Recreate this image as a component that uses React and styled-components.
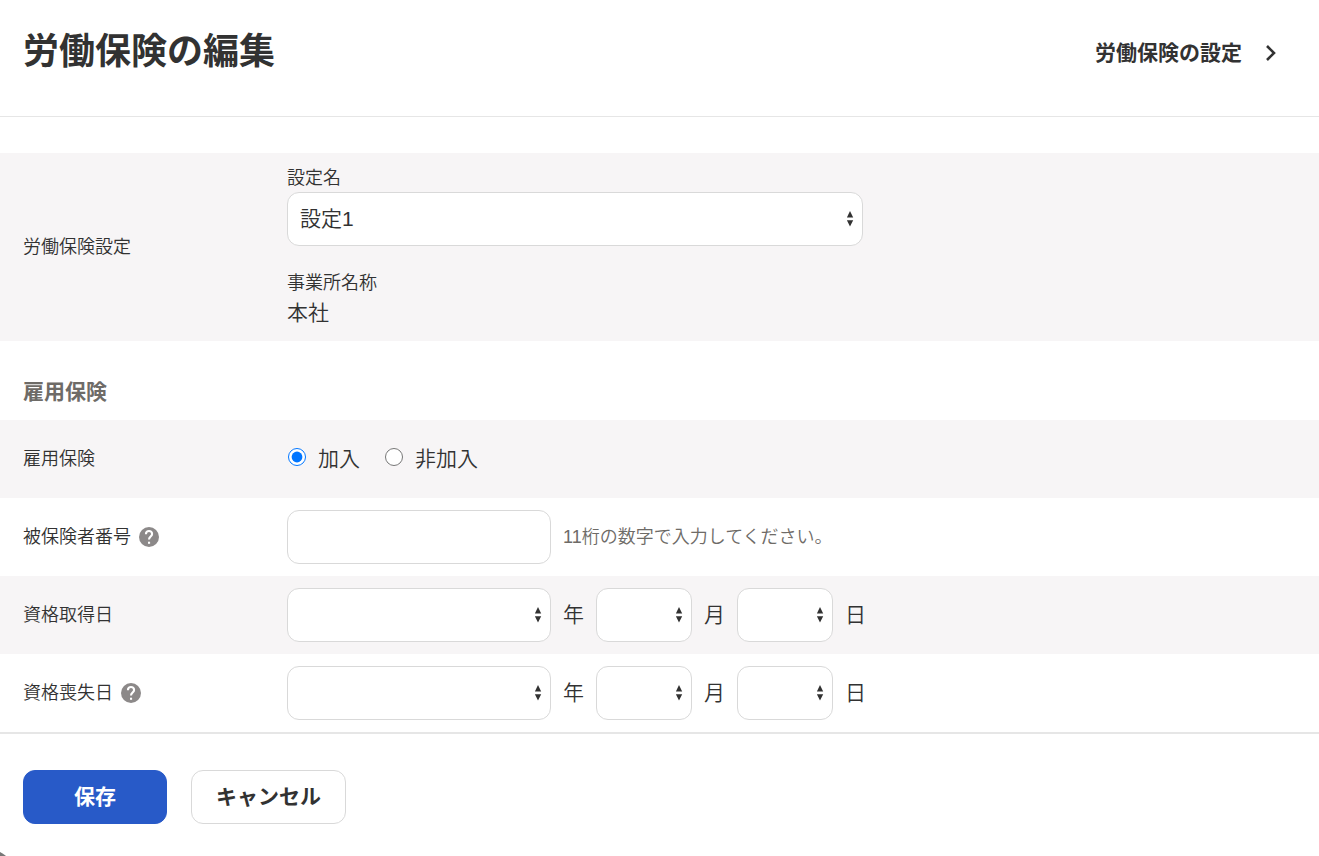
import React, { useState } from 'react';
import styled, { createGlobalStyle } from 'styled-components';

const GlobalStyle = createGlobalStyle`
  * {
    box-sizing: border-box;
  }

  body {
    margin: 0;
    background: #fff;
    color: #323232;
    font-family: "Liberation Sans", "Noto Sans CJK JP", sans-serif;
    font-size: 21px;
    font-weight: 350;
    line-height: 32px;
  }

  button, input, select {
    font: inherit;
    color: inherit;
  }
`;

const Page = styled.div`
  position: relative;
  min-height: 100vh;
`;

const Header = styled.header`
  display: flex;
  justify-content: space-between;
  align-items: flex-start;
  padding: 25px 36px 35px 23px;
  margin-bottom: 36px;
  border-bottom: 1px solid #e6e6e6;
`;

const Title = styled.h1`
  margin: 0;
  font-size: 36px;
  line-height: 54px;
  font-weight: 700;
`;

const SettingsLink = styled.a`
  display: flex;
  align-items: center;
  gap: 16px;
  line-height: 56px;
  font-weight: 700;
  color: inherit;
  text-decoration: none;
`;

const SectionTitle = styled.h2`
  margin: 0;
  padding: 35px 23px 12px;
  font-size: 21px;
  line-height: 32px;
  font-weight: 700;
  color: #6e6b67;
`;

const Row = styled.div`
  display: grid;
  grid-template-columns: 264px 1fr;
  align-items: center;
  min-height: 78px;
  padding: 12px 23px;
  background: ${props => props.$shaded ? '#f7f5f6' : '#fff'};
`;

const RowLabel = styled.div`
  display: flex;
  align-items: center;
  gap: 8px;
  font-size: 18px;
  line-height: 27px;
`;

const Fields = styled.div`
  display: flex;
  align-items: center;
  gap: ${props => props.$gap || 12}px;
`;

const Stack = styled.div`
  display: grid;
  gap: 24px;
`;

const SmallLabel = styled.label`
  display: block;
  font-size: 18px;
  line-height: 27px;
`;

const SelectBox = styled.div`
  position: relative;
  width: ${props => props.$width}px;
  max-width: 100%;

  svg {
    position: absolute;
    top: 19px;
    right: 9px;
    pointer-events: none;
  }
`;

const StyledSelect = styled.select`
  display: block;
  appearance: none;
  width: 100%;
  height: 54px;
  padding: 0 30px 0 12px;
  border: 1px solid #d9d9d9;
  border-radius: 12px;
  background: #fff;
`;

const TextInput = styled.input`
  width: 264px;
  height: 54px;
  padding: 0 12px;
  border: 1px solid #d9d9d9;
  border-radius: 12px;
  background: #fff;
`;

const RadioLabel = styled.label`
  display: flex;
  align-items: center;
  gap: 12px;
`;

const Radio = styled.input`
  width: 18px;
  height: 18px;
  margin: 0 0 4px 1px;
`;

const Hint = styled.span`
  font-size: 18px;
  line-height: 27px;
  color: #6e6b67;
`;

const HelpButton = styled.button`
  display: flex;
  padding: 0;
  border: none;
  background: none;
  cursor: pointer;
`;

const Footer = styled.footer`
  display: flex;
  gap: 24px;
  padding: 36px 23px 32px;
  border-top: 2px solid #e6e6e6;
`;

const Button = styled.button`
  min-width: 144px;
  height: 54px;
  padding: 0 24px;
  border: 1px solid ${props => props.$primary ? '#285ac8' : '#d9d9d9'};
  border-radius: 12px;
  background: ${props => props.$primary ? '#285ac8' : '#fff'};
  color: ${props => props.$primary ? '#fff' : '#323232'};
  font-weight: 700;
  cursor: pointer;
`;

const Corner = styled.svg`
  position: absolute;
  left: 0;
  bottom: 0;
`;

const HelpIcon = () => (
  <svg width="20" height="20" viewBox="0 0 20 20" fill="none" aria-hidden="true">
    <circle cx="10" cy="10" r="10" fill="#8c8989" />
    <path d="M6.9 7.2C6.9 5.2 8.2 4 10 4s3.1 1.2 3.1 2.9c0 2.5-3.1 2.7-3.1 5.6" stroke="#fff" strokeWidth="2.1" />
    <path d="M9 14.7h2.1v2.1H9z" fill="#fff" />
  </svg>
);

const Select = ({ id, label, width, options = [''] }) => (
  <SelectBox $width={width}>
    <StyledSelect id={id} aria-label={label}>
      {options.map(option => <option key={option}>{option}</option>)}
    </StyledSelect>
    <svg width="7" height="16" viewBox="0 0 7 16" fill="#323232" aria-hidden="true">
      <path d="M3 0L6.2 6.6H-.2zM3 15.6L-.2 9.2h6.4z" />
    </svg>
  </SelectBox>
);

const DateFields = ({ label }) => (
  <Fields role="group" aria-label={label}>
    <Select width={264} label={`${label} 年`} />
    <span>年</span>
    <Select width={96} label={`${label} 月`} />
    <span>月</span>
    <Select width={96} label={`${label} 日`} />
    <span>日</span>
  </Fields>
);

const App = () => {
  const [enrolled, setEnrolled] = useState(true);
  const [number, setNumber] = useState('');

  return (
    <>
      <GlobalStyle />
      <Page>
        <Header>
          <Title>労働保険の編集</Title>
          <SettingsLink href="#settings">
            労働保険の設定
            <svg width="25" height="24" viewBox="0 0 25 24" fill="none" stroke="#323232" strokeWidth="2.6" aria-hidden="true">
              <path d="M9 5l7 7-7 7" />
            </svg>
          </SettingsLink>
        </Header>

        <form onSubmit={(e) => e.preventDefault()}>
          <Row $shaded>
            <RowLabel>労働保険設定</RowLabel>
            <Stack>
              <div>
                <SmallLabel htmlFor="setting">設定名</SmallLabel>
                <Select id="setting" width={576} options={['設定1']} />
              </div>
              <div>
                <SmallLabel as="div">事業所名称</SmallLabel>
                <div>本社</div>
              </div>
            </Stack>
          </Row>

          <SectionTitle>雇用保険</SectionTitle>
          <Row $shaded>
            <RowLabel>雇用保険</RowLabel>
            <Fields $gap={24} role="radiogroup" aria-label="雇用保険">
              <RadioLabel>
                <Radio type="radio" name="enrolled" checked={enrolled} onChange={() => setEnrolled(true)} />
                加入
              </RadioLabel>
              <RadioLabel>
                <Radio type="radio" name="enrolled" checked={!enrolled} onChange={() => setEnrolled(false)} />
                非加入
              </RadioLabel>
            </Fields>
          </Row>
          <Row>
            <RowLabel>
              <label htmlFor="number">被保険者番号</label>
              <HelpButton type="button" aria-label="ヘルプ"><HelpIcon /></HelpButton>
            </RowLabel>
            <Fields>
              <TextInput id="number" type="text" value={number} onChange={(e) => setNumber(e.target.value)} />
              <Hint>11桁の数字で入力してください。</Hint>
            </Fields>
          </Row>
          <Row $shaded>
            <RowLabel>資格取得日</RowLabel>
            <DateFields label="資格取得日" />
          </Row>
          <Row>
            <RowLabel>
              資格喪失日
              <HelpButton type="button" aria-label="ヘルプ"><HelpIcon /></HelpButton>
            </RowLabel>
            <DateFields label="資格喪失日" />
          </Row>

          <Footer>
            <Button type="submit" $primary>保存</Button>
            <Button type="button">キャンセル</Button>
          </Footer>
        </form>

        <Corner width="6" height="4" viewBox="0 0 6 4" fill="#777" aria-hidden="true">
          <path d="M0 0Q3 1.5 6 4H0z" />
        </Corner>
      </Page>
    </>
  );
};

export default App;
